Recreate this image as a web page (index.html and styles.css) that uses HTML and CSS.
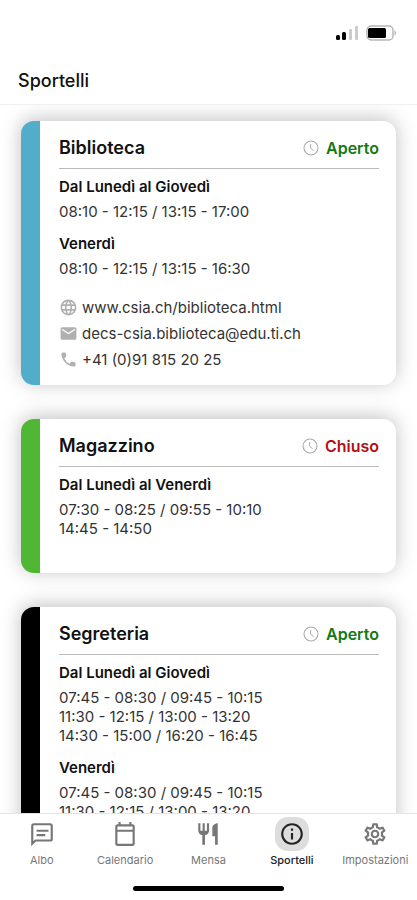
FILE: index.html
```
<!DOCTYPE html>
<html lang="it">

<head>
    <meta charset="UTF-8">
    <meta name="viewport" content="width=device-width, initial-scale=1.0">
    <title>Sportelli</title>
    <link rel="stylesheet" href="styles.css">
</head>

<body>
    <!-- icone condivise -->
    <svg class="sprite" aria-hidden="true">
        <symbol id="clock" viewBox="0 0 24 24">
            <circle cx="12" cy="12" r="10.5" fill="none" stroke="currentColor" stroke-width="1.6" />
            <path d="M11.5 6v6.5l4.5 3.5" fill="none" stroke="currentColor" stroke-width="1.5" />
        </symbol>
    </svg>

    <div class="status-bar">
        <svg class="signal" viewBox="0 0 22 14" aria-hidden="true">
            <rect x="0" y="9" width="4" height="5" rx="1.5" />
            <rect x="6" y="6" width="4" height="8" rx="1.5" />
            <rect x="13" y="3" width="3" height="11" rx="1" fill="#ccc" />
            <rect x="19" y="0" width="3" height="14" rx="1" fill="#ccc" />
        </svg>
        <svg class="battery" viewBox="0 0 31 16" aria-hidden="true">
            <rect x="1" y="1" width="26" height="14" rx="4" fill="none" stroke="#b5b5b5" stroke-width="1.4" />
            <rect x="2" y="3" width="18" height="10" rx="1.5" />
            <path d="M28.5 5.500v5c2-.6 2-4.400 0-5z" fill="#b5b5b5" />
        </svg>
    </div>

    <header class="header">
        <h1>Sportelli</h1>
    </header>

    <main class="content">
        <section class="card biblioteca">
            <div class="card-head">
                <h2>Biblioteca</h2>
                <span class="status open"><svg aria-hidden="true"><use href="#clock" /></svg>Aperto</span>
            </div>
            <div class="schedule">
                <h3>Dal Lunedì al Giovedì</h3>
                <p>08:10 - 12:15 / 13:15 - 17:00</p>
                <h3>Venerdì</h3>
                <p>08:10 - 12:15 / 13:15 - 16:30</p>
            </div>
            <ul class="contacts">
                <li>
                    <svg viewBox="0 0 24 24" aria-hidden="true"><path d="M11.990 2C6.470 2 2 6.480 2 12s4.470 10 9.990 10C17.520 22 22 17.520 22 12S17.520 2 11.990 2zm6.930 6h-2.950a15.650 15.650 0 0 0-1.380-3.560A8.030 8.030 0 0 1 18.920 8zM12 4.040c.83 1.200 1.480 2.530 1.910 3.960h-3.820c.43-1.430 1.080-2.760 1.910-3.960zM4.260 14C4.100 13.360 4 12.690 4 12s.1-1.360.26-2h3.380c-.08.66-.14 1.320-.14 2s.06 1.340.14 2H4.260zm.82 2h2.950c.32 1.250.78 2.450 1.380 3.560A7.987 7.987 0 0 1 5.080 16zm2.950-8H5.080a7.987 7.987 0 0 1 4.330-3.560A15.650 15.650 0 0 0 8.030 8zM12 19.960c-.83-1.200-1.480-2.530-1.910-3.960h3.820c-.43 1.430-1.080 2.760-1.910 3.960zM14.340 14H9.660c-.09-.66-.16-1.320-.16-2s.07-1.350.16-2h4.680c.09.65.16 1.320.16 2s-.07 1.340-.16 2zm.25 5.560c.6-1.110 1.060-2.310 1.380-3.560h2.950a8.030 8.030 0 0 1-4.330 3.560zM16.360 14c.08-.66.14-1.320.14-2s-.06-1.340-.14-2h3.380c.16.64.26 1.310.26 2s-.1 1.360-.26 2h-3.380z" /></svg>
                    <a href="#">www.csia.ch/biblioteca.html</a>
                </li>
                <li>
                    <svg viewBox="0 0 24 24" aria-hidden="true"><path d="M20 4H4c-1.100 0-2 .9-2 2v12c0 1.100.9 2 2 2h16c1.100 0 2-.9 2-2V6c0-1.100-.9-2-2-2zm0 4-8 5-8-5V6l8 5 8-5v2z" /></svg>
                    <a href="#">decs-csia.biblioteca@edu.ti.ch</a>
                </li>
                <li>
                    <svg viewBox="0 0 24 24" aria-hidden="true"><path d="M19.230 15.260l-2.540-.29a1.990 1.990 0 0 0-1.640.57l-1.840 1.840a15.045 15.045 0 0 1-6.590-6.590l1.850-1.850c.43-.43.64-1.030.57-1.640l-.29-2.520A2.001 2.001 0 0 0 6.760 3H5.030c-1.130 0-2.070.94-2 2.070.53 8.540 7.360 15.360 15.890 15.890 1.130.07 2.070-.87 2.070-2v-1.730c.01-1.010-.75-1.860-1.760-1.970z" /></svg>
                    <a href="#">+41 (0)91 815 20 25</a>
                </li>
            </ul>
        </section>

        <section class="card magazzino">
            <div class="card-head">
                <h2>Magazzino</h2>
                <span class="status closed"><svg aria-hidden="true"><use href="#clock" /></svg>Chiuso</span>
            </div>
            <div class="schedule">
                <h3>Dal Lunedì al Venerdì</h3>
                <p>07:30 - 08:25 / 09:55 - 10:10</p>
                <p>14:45 - 14:50</p>
            </div>
        </section>

        <section class="card segreteria">
            <div class="card-head">
                <h2>Segreteria</h2>
                <span class="status open"><svg aria-hidden="true"><use href="#clock" /></svg>Aperto</span>
            </div>
            <div class="schedule">
                <h3>Dal Lunedì al Giovedì</h3>
                <p>07:45 - 08:30 / 09:45 - 10:15</p>
                <p>11:30 - 12:15 / 13:00 - 13:20</p>
                <p>14:30 - 15:00 / 16:20 - 16:45</p>
                <h3>Venerdì</h3>
                <p>07:45 - 08:30 / 09:45 - 10:15</p>
                <p>11:30 - 12:15 / 13:00 - 13:20</p>
            </div>
        </section>
    </main>

    <footer class="footer">
        <nav class="tab-menu">
            <a href="#">
                <span class="icon"><svg viewBox="0 0 24 24" aria-hidden="true"><path d="M3 21V4.500Q3 3 4.500 3h15Q21 3 21 4.500v12q0 1.500-1.500 1.500H6z" fill="none" stroke="currentColor" stroke-width="2" /><path d="M7 8h11v2H7zM7 12h8v2H7z" /></svg></span>
                Albo
            </a>
            <a href="#">
                <span class="icon"><svg viewBox="0 0 24 24" aria-hidden="true"><path d="M19 3h-1V1h-2v2H8V1H6v2H5c-1.100 0-2 .9-2 2v16c0 1.100.9 2 2 2h14c1.100 0 2-.9 2-2V5c0-1.100-.9-2-2-2zm0 18H5V10h14v11zm0-13H5V5h14v3z" /></svg></span>
                Calendario
            </a>
            <a href="#">
                <span class="icon"><svg viewBox="0 0 24 24" aria-hidden="true"><path d="M11 9H9V2H7v7H5V2H3v7c0 2.120 1.660 3.840 3.750 3.970V22h2.500v-9.030C11.340 12.840 13 11.120 13 9V2h-2v7zm5-3v8h2.500v8H21V2c-2.760 0-5 2.240-5 4z" /></svg></span>
                Mensa
            </a>
            <a href="#" class="select">
                <span class="icon"><svg viewBox="0 0 24 24" aria-hidden="true"><path d="M11 7h2v2h-2zm0 4h2v6h-2zm1-9C6.480 2 2 6.480 2 12s4.480 10 10 10 10-4.480 10-10S17.520 2 12 2zm0 18c-4.410 0-8-3.590-8-8s3.590-8 8-8 8 3.590 8 8-3.590 8-8 8z" /></svg></span>
                Sportelli
            </a>
            <a href="#">
                <span class="icon"><svg viewBox="0 0 24 24" aria-hidden="true"><path d="M19.430 12.980c.04-.32.07-.64.07-.98 0-.34-.03-.66-.07-.98l2.110-1.650c.19-.15.24-.42.12-.64l-2-3.460a.5.5 0 0 0-.61-.22l-2.490 1c-.52-.4-1.080-.73-1.690-.98l-.38-2.650A.488.488 0 0 0 14 2h-4c-.25 0-.46.18-.49.42l-.38 2.650c-.61.25-1.170.59-1.690.98l-2.490-1a.566.566 0 0 0-.18-.03c-.17 0-.34.09-.43.25l-2 3.460c-.13.22-.07.49.12.64l2.110 1.650c-.04.32-.07.65-.07.98 0 .33.03.66.07.98l-2.110 1.650c-.19.15-.24.42-.12.64l2 3.460a.5.5 0 0 0 .61.22l2.490-1c.52.4 1.080.73 1.690.98l.38 2.650c.03.24.24.42.49.42h4c.25 0 .46-.18.49-.42l.38-2.650c.61-.25 1.170-.59 1.690-.98l2.490 1c.06.02.12.03.18.03.17 0 .34-.09.43-.25l2-3.460c.12-.22.07-.49-.12-.64l-2.110-1.650zm-1.980-1.710c.04.31.05.52.05.73 0 .21-.02.43-.05.73l-.14 1.130.89.7 1.080.84-.7 1.210-1.270-.51-1.040-.42-.9.68c-.43.32-.84.56-1.250.73l-1.060.43-.16 1.130-.2 1.350h-1.400l-.35-2.480-1.060-.43c-.43-.18-.83-.41-1.230-.71l-.91-.7-1.060.43-1.270.51-.7-1.210 1.080-.84.89-.7-.14-1.130c-.03-.31-.05-.54-.05-.74s.02-.43.05-.73l.14-1.130-.89-.7-1.080-.84.7-1.210 1.270.51 1.040.42.9-.68c.43-.32.84-.56 1.250-.73l1.060-.43.16-1.130.2-1.350h1.390l.35 2.480 1.060.43c.43.18.83.41 1.230.71l.91.7 1.060-.43 1.270-.51.7 1.210-1.070.85-.89.7.14 1.130zM12 8c-2.210 0-4 1.790-4 4s1.790 4 4 4 4-1.790 4-4-1.790-4-4-4zm0 6c-1.100 0-2-.9-2-2s.9-2 2-2 2 .9 2 2-.9 2-2 2z" /></svg></span>
                Impostazioni
            </a>
        </nav>
        <div class="home-indicator"></div>
    </footer>
</body>

</html>
```
FILE: styles.css
```
* {
    box-sizing: border-box;
    margin: 0;
    padding: 0;
}

body {
    height: 100vh;
    display: flex;
    flex-direction: column;
    background: #fff;
    color: #111;
    font-family: Inter, "Liberation Sans", sans-serif;
    font-size: 15px;
    line-height: 19px;
}

a {
    color: inherit;
    text-decoration: none;
}

.sprite {
    display: none;
}

.status-bar {
    display: flex;
    justify-content: flex-end;
    align-items: center;
    gap: 8px;
    padding: 25px 20px 0 0;
}

.signal {
    width: 22px;
    height: 14px;
}

.battery {
    width: 31px;
    height: 16px;
}

.header {
    padding: 29px 18px 12px;
    border-bottom: 1px solid #f0f0f0;
}

.header h1 {
    font-size: 18px;
    font-weight: 500;
    line-height: 22px;
}

.content {
    flex: 1;
    min-height: 0;
    display: flex;
    flex-direction: column;
    gap: 34px;
    padding: 16px 21px;
    overflow-y: auto;
    scrollbar-width: none;
}

.card {
    flex-shrink: 0;
    padding: 16px 17px 16px 19px;
    border-left: 19px solid #000;
    border-radius: 13px;
    background: #fff;
    box-shadow: 0 -2px 20px rgba(0, 0, 0, 0.25);
}

.card.biblioteca {
    border-left-color: #51adca;
}

.card.magazzino {
    border-left-color: #50b734;
}

.card-head {
    display: flex;
    justify-content: space-between;
    align-items: center;
    padding-bottom: 9px;
    border-bottom: 1px solid #bbb;
}

.card-head h2 {
    font-size: 18px;
    font-weight: 600;
    line-height: 22px;
}

.status {
    display: flex;
    align-items: center;
    gap: 7px;
    font-size: 16px;
    font-weight: 600;
}

.status svg {
    width: 16px;
    height: 16px;
    color: #aaa;
}

.status.open {
    color: #137a13;
}

.status.closed {
    color: #b01212;
}

.schedule {
    padding: 8px 0 19px;
}

.schedule h3 {
    margin-bottom: 6px;
    font-size: 15px;
    font-weight: 600;
}

.schedule p {
    color: #333;
}

.schedule p + h3 {
    margin-top: 13px;
}

.contacts {
    display: flex;
    flex-direction: column;
    gap: 7px;
    padding-top: 1px;
    list-style: none;
}

.contacts li {
    display: flex;
    align-items: center;
    gap: 4px;
    color: #333;
}

.contacts svg {
    width: 19px;
    height: 19px;
    fill: #b0b0b0;
}

.footer {
    border-top: 1px solid #e4e4e4;
    background: #fff;
}

.tab-menu {
    display: grid;
    grid-template-columns: repeat(5, 1fr);
}

.tab-menu a {
    display: flex;
    flex-direction: column;
    align-items: center;
    gap: 1px;
    padding-top: 3px;
    color: #777;
    font-size: 11px;
    line-height: 16px;
}

.tab-menu .icon {
    padding: 4px;
    border-radius: 13px;
}

.tab-menu svg {
    display: block;
    width: 26px;
    height: 26px;
    fill: currentColor;
}

.tab-menu .select {
    color: #222;
    font-weight: 500;
}

.tab-menu .select .icon {
    background: #ddd;
}

.home-indicator {
    width: 36%;
    height: 5px;
    margin: 18px auto 9px;
    border-radius: 3px;
    background: #000;
}
```
